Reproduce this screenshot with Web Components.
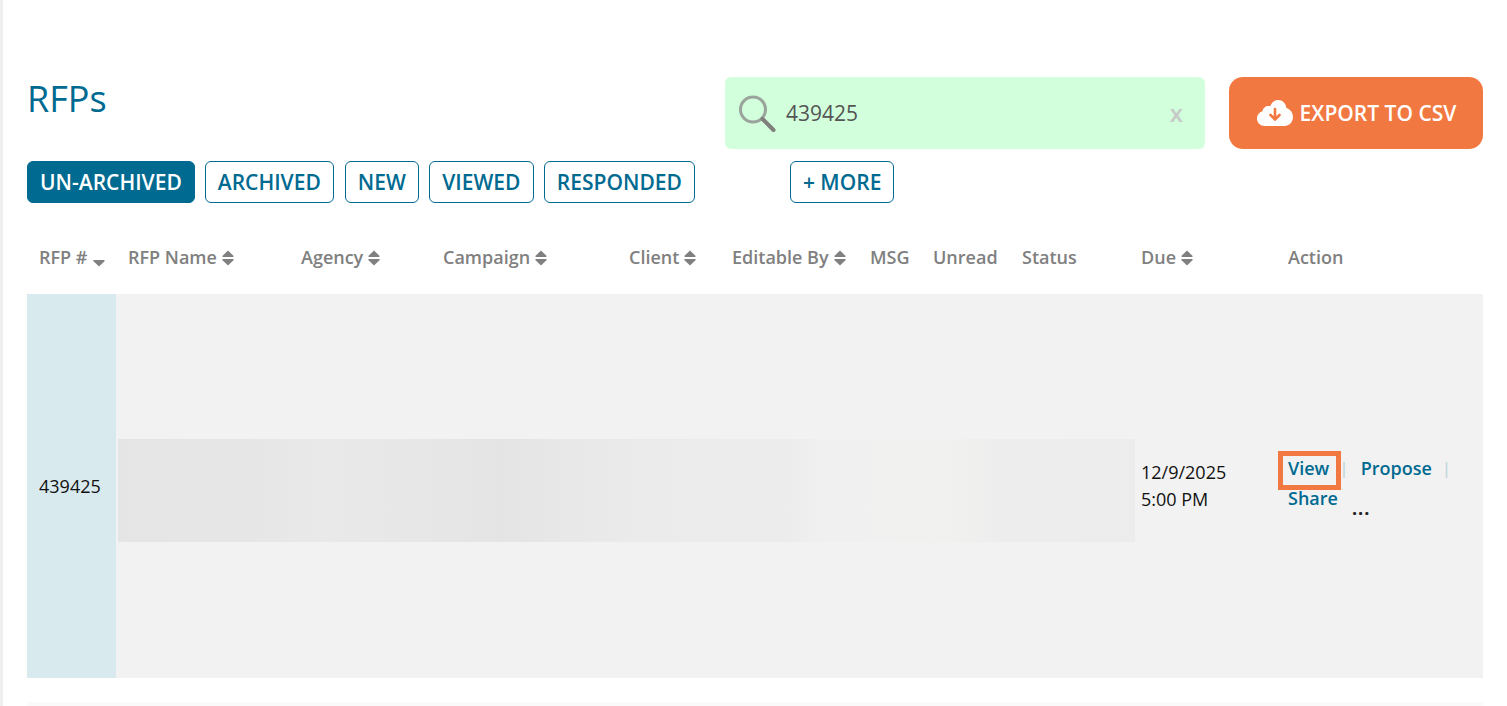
<!DOCTYPE html>
<html><head><meta charset="utf-8"><title>RFPs</title>
<style>html,body{margin:0;height:706px;overflow:hidden;background:#fff}body{font-family:"Open Sans",sans-serif}</style>
</head><body>
<rfp-page></rfp-page>
<script>
const def=(n,html,init)=>customElements.define(n,class extends HTMLElement{
  constructor(){super();this.attachShadow({mode:'open'}).innerHTML=typeof html==='function'?html(this):html;}
  connectedCallback(){ if(init) init(this);}
});
const BLUE='#006a91';
const ORANGE='#f27841';
def('rfp-tab',`<style>:host{display:inline-flex;align-items:center;justify-content:center;box-sizing:border-box;height:42px;padding:1px 12px 0;border:1px solid ${BLUE};border-radius:6px;color:${BLUE};font:600 21px/1 "Open Sans",sans-serif;white-space:nowrap;background:#fff}
:host([active]){background:${BLUE};color:#fff}</style><slot></slot>`);
def('search-box',`<style>:host{display:flex;align-items:center;box-sizing:border-box;width:480px;height:72px;background:#d2ffdc;border-radius:6px;padding:0 22px 0 13px;color:#555;font:400 21px/1 "Open Sans",sans-serif}
svg{display:block;flex:none;margin:1px 10px 0 0}.v{flex:1;margin-top:1px}.x{font:600 24px/1 "Open Sans",sans-serif;color:#c6c9c6;margin-top:-1px}</style>
<svg width="38" height="38" viewBox="0 0 38 38" fill="none"><circle cx="15" cy="14.500" r="12.500" stroke="#9aa39c" stroke-width="3"/><path d="M24.500 24l11 11" stroke="#7f7f7b" stroke-width="4" stroke-linecap="round"/></svg>
<span class="v">439425</span><span class="x">x</span>`);
def('export-button',`<style>:host{display:flex;align-items:center;justify-content:center;gap:6px;box-sizing:border-box;width:254px;height:72px;background:${ORANGE};border-radius:14px;color:#fff;font:600 21px/1 "Open Sans",sans-serif;white-space:nowrap}svg{display:block}</style>
<svg width="38" height="28" viewBox="0 0 38 28"><path fill="#fff" d="M9 27C4 27 1 23.500 1 19.500c0-3.500 2.300-6.500 5.500-7.300C7 9 9.500 7 12.500 7c.6 0 1.200.1 1.700.3C15.700 3.400 18.500 1 22 1c4.500 0 8 3.500 8.300 8 3.900.9 6.700 4.800 6.700 9 0 5-3.800 9-8.500 9z"/><path fill="none" stroke="${ORANGE}" stroke-width="2.600" stroke-linecap="round" stroke-linejoin="round" d="M19 10v10M14.500 16l4.500 4.500 4.500-4.500"/></svg><slot></slot>`);
def('sort-icon',`<style>:host{display:inline-block;width:12px;height:16px;margin:2px 0 0 5px;flex:none}svg{display:block}</style>
<svg width="12" height="16" viewBox="0 0 12 16" fill="#808080"><path d="M6 .5l5.400 5.300c.5.500.2 1.200-.5 1.200H1.100C.4 7 .1 6.300.6 5.800z"/><path d="M6 15.500L.6 10.200C.1 9.700.4 9 1.100 9h9.800c.7 0 1 .7.500 1.200z"/></svg>`);
def('sort-down',`<style>:host{display:inline-block;width:12px;height:16px;margin:6px 0 0 6px;flex:none}svg{display:block}</style>
<svg width="12" height="16" viewBox="0 0 12 16" fill="#808080"><path d="M6 14.500L.6 9.200C.1 8.700.4 8 1.100 8h9.800c.7 0 1 .7.500 1.200z"/></svg>`);
def('th-cell',`<style>:host{display:flex;align-items:center;padding-left:12px;color:#808080;font:600 18px/1 "Open Sans",sans-serif;white-space:nowrap}</style><slot></slot>`);
def('table-head',`<style>:host{display:grid;grid-template-columns:var(--cols);box-sizing:border-box;height:73px;margin-top:18px;align-items:center;padding-bottom:2px}</style><slot></slot>`);
def('blur-block',`<style>:host{display:block;align-self:center;height:103px;margin:8px 0 0 2px;
background:linear-gradient(90deg,#e5e5e5 0,#e6e6e6 12%,#e9e9e9 20%,#e7e7e7 30%,#e4e4e4 38%,#e8e8e8 44%,#ebebeb 52%,#ececec 66%,#eff0ef 69%,#f1f2f0 80%,#f0f0ef 83%,#ededed 87%,#ececec 100%)}</style>`);
def('action-links',`<style>:host{display:block;position:relative;padding:0 0 0 6px;font:600 18px/30px "Open Sans",sans-serif;color:${BLUE};align-self:center;margin-top:-6px}
.line{display:flex;align-items:center;height:30px;white-space:nowrap}
.sep{color:#c5d6dc;font-weight:600;font-size:17px}
.s1{margin-left:10px}.p{margin-left:12px}.s2{margin-left:10px}
.dots{color:#222;font:700 18px/1 "Open Sans",sans-serif;margin-left:14px;position:relative;top:10px;letter-spacing:1px}
.hl{position:absolute;left:-4px;top:-2px;width:63px;height:39px;box-sizing:border-box;border:5px solid ${ORANGE}}</style>
<div class="line"><span>View</span><span class="sep s1">|</span><span class="p">Propose</span><span class="sep s2">|</span></div>
<div class="line"><span>Share</span><span class="dots">...</span></div><div class="hl"></div>`);
def('rfp-row',`<style>:host{display:grid;grid-template-columns:89px 1019px 147px 201px;height:384px;background:#f2f2f2;font:400 18px/27px "Open Sans",sans-serif;color:#111}
.id{background:#d9eaef;display:flex;align-items:center;padding-left:12px}
.due{align-self:center;padding-left:6px;margin-top:-1px}</style>
<div class="id">439425</div><blur-block></blur-block><div class="due">12/9/2025<br>5:00 PM</div><action-links></action-links>`);
def('rfp-page',`<style>:host{display:block;box-sizing:border-box;height:706px;border-left:3px solid #eee;padding:77px 24px 0 24px;--cols:89px 173px 142px 186px 103px 138px 63px 89px 119px 147px 207px;overflow:hidden}
.top{display:flex;align-items:flex-start}
h1{margin:-1px 0 0;font:400 36px/46px "Open Sans",sans-serif;color:${BLUE};flex:1}
.top export-button{margin-left:24px}
.tabs{display:flex;gap:10px;margin-top:12px}
.new{margin-left:1px}.viewed{min-width:105px}.resp{margin-left:0}
.more{margin-left:85px}
.band{height:4px;margin-top:24px;background:#fafafa}</style>
<div class="top"><h1>RFPs</h1><search-box></search-box><export-button>EXPORT TO CSV</export-button></div>
<div class="tabs"><rfp-tab active>UN-ARCHIVED</rfp-tab><rfp-tab>ARCHIVED</rfp-tab><rfp-tab class="new">NEW</rfp-tab><rfp-tab class="viewed">VIEWED</rfp-tab><rfp-tab class="resp">RESPONDED</rfp-tab><rfp-tab class="more">+ MORE</rfp-tab></div>
<table-head>
<th-cell>RFP #<sort-down></sort-down></th-cell><th-cell>RFP Name<sort-icon></sort-icon></th-cell><th-cell>Agency<sort-icon></sort-icon></th-cell><th-cell>Campaign<sort-icon></sort-icon></th-cell><th-cell>Client<sort-icon></sort-icon></th-cell><th-cell>Editable By<sort-icon></sort-icon></th-cell><th-cell>MSG</th-cell><th-cell>Unread</th-cell><th-cell>Status</th-cell><th-cell>Due<sort-icon></sort-icon></th-cell><th-cell>Action</th-cell>
</table-head>
<rfp-row></rfp-row><div class="band"></div>`);
</script>
</body></html>
